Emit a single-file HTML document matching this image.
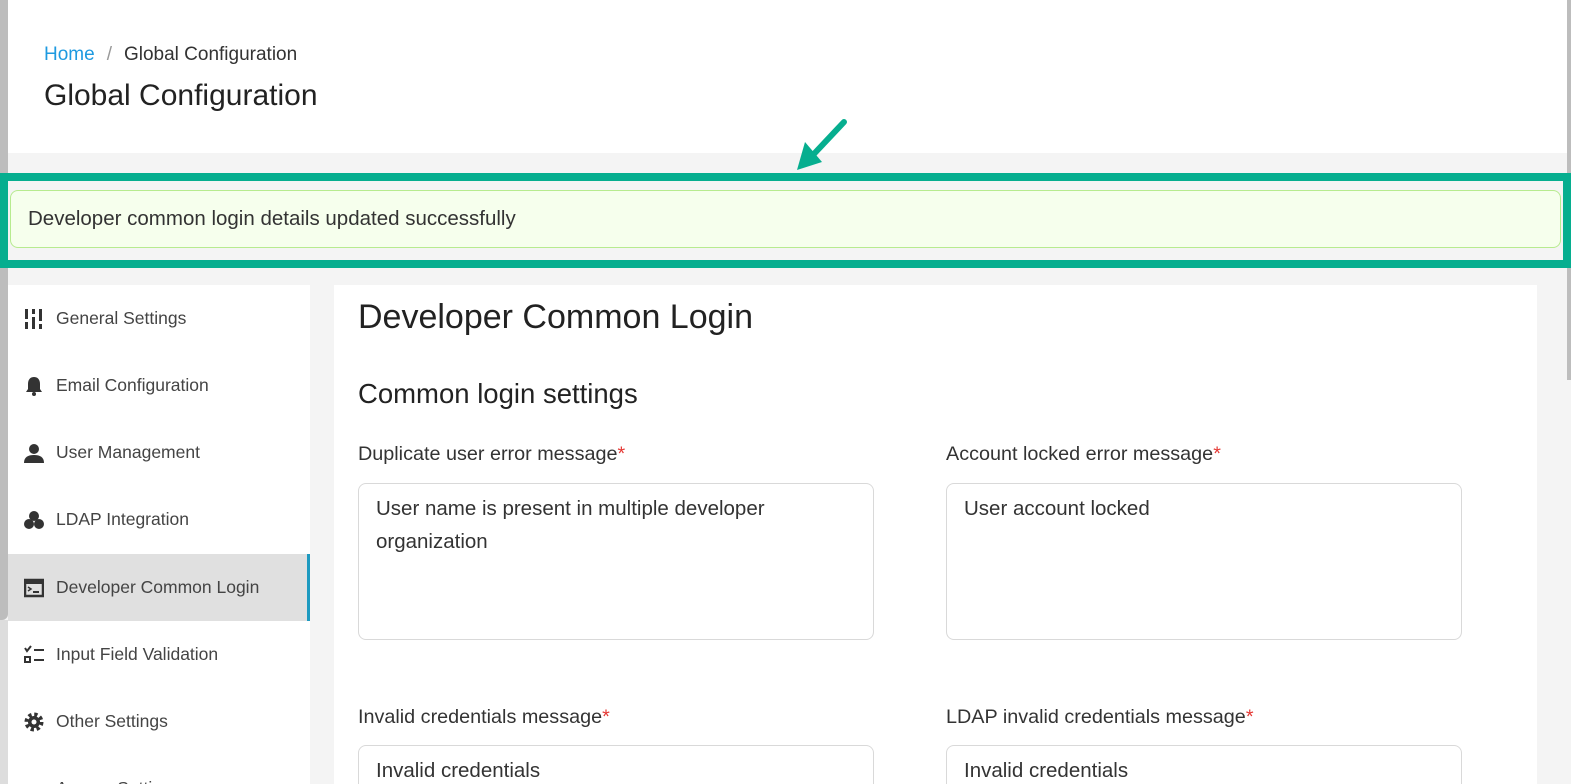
<!DOCTYPE html>
<html style="width:1571px;height:784px;overflow:hidden"><head><style>
*{box-sizing:border-box;margin:0;padding:0}
html,body{width:1571px;height:784px;overflow:hidden}
body{background:#f4f4f4;font-family:"Liberation Sans",sans-serif;color:#333}
#wrap{position:relative;width:1571px;height:784px;overflow:hidden}
.abs{position:absolute}
.hdr{left:0;top:0;width:1567px;height:153px;background:#fff}
.side{left:8px;top:285px;width:302px;height:499px;background:#fff;overflow:hidden}
.item{position:absolute;left:0;width:302px;height:67px;font-size:17.5px;color:#444;display:flex;align-items:center;padding-left:48px}
.item svg{position:absolute;left:16px;top:24px}
.main{left:334px;top:285px;width:1203px;height:499px;background:#fff}
.lbl{font-size:19.8px;color:#333;position:absolute}
.lbl b{color:#e53935;font-weight:normal}
.ta{position:absolute;border:1px solid #d9d9d9;border-radius:8px;background:#fff;font-size:20.5px;line-height:33px;padding:8px 17px;color:#333}
</style></head><body><div id="wrap">
<div class="abs hdr"></div>
<div class="abs" style="left:44px;top:44px;font-size:19px;color:#333"><span style="color:#1e9ae0">Home</span><span style="color:#999;margin:0 12px">/</span>Global Configuration</div>
<div class="abs" style="left:44px;top:79px;font-size:30px;color:#222">Global Configuration</div>
<div class="abs" style="left:0;top:0;width:8px;height:620px;background:#bdbdbd;border-radius:0 0 6px 0"></div>
<div class="abs" style="left:0;top:620px;width:8px;height:164px;background:#ddd"></div>
<div class="abs" style="left:1567px;top:0;width:4px;height:380px;background:#bdbdbd"></div>
<svg class="abs" style="left:790px;top:112px" width="66" height="62"><line x1="54" y1="10" x2="22" y2="44" stroke="#06ae8f" stroke-width="6" stroke-linecap="round"/><polygon points="7,58 15,30 32,50" fill="#06ae8f"/></svg>
<div class="abs" style="left:10px;top:190px;width:1551px;height:58px;background:#f6ffed;border:1px solid #b7eb8f;border-radius:8px;font-size:20.5px;padding:16px 0 0 17px;color:#333">Developer common login details updated successfully</div>
<div class="abs" style="left:0;top:173px;width:1571px;height:95px;border:8px solid #06ae8f"></div>
<div class="abs side">
<div class="item" style="top:0"><svg width="20" height="20" viewBox="0 0 20 20" fill="#333"><rect x="1" y="0" width="3" height="20"/><rect x="8" y="0" width="3" height="20"/><rect x="15" y="0" width="3" height="20"/><rect x="0" y="10" width="5" height="3" fill="#fff"/><rect x="7" y="5" width="5" height="3" fill="#fff"/><rect x="14" y="12" width="5" height="3" fill="#fff"/></svg>General Settings</div>
<div class="item" style="top:67px"><svg width="20" height="20" viewBox="0 0 20 20" fill="#333"><path d="M10 1c-4 0-6 3-6 7v5l-2 3h16l-2-3V8c0-4-2-7-6-7z"/><circle cx="10" cy="18" r="2"/></svg>Email Configuration</div>
<div class="item" style="top:134px"><svg width="20" height="20" viewBox="0 0 20 20" fill="#333"><circle cx="10" cy="6" r="5"/><path d="M0 20c0-6 4-8 10-8s10 2 10 8z"/></svg>User Management</div>
<div class="item" style="top:201px"><svg width="20" height="20" viewBox="0 0 20 20" fill="#333"><circle cx="10" cy="6" r="5"/><circle cx="5" cy="14" r="5"/><circle cx="15" cy="14" r="5"/></svg>LDAP Integration</div>
<div class="item" style="top:269px;background:#e0e0e0;border-right:3px solid #1e9ac0"><svg width="20" height="20" viewBox="0 0 20 20"><rect x="1" y="2" width="18" height="16" fill="none" stroke="#333" stroke-width="2.5"/><rect x="1" y="2" width="18" height="4" fill="#333"/><path d="M4 9l3 2-3 2" stroke="#333" stroke-width="1.5" fill="none"/><rect x="9" y="13" width="6" height="2" fill="#333"/></svg>Developer Common Login</div>
<div class="item" style="top:336px"><svg width="20" height="20" viewBox="0 0 20 20" fill="none" stroke="#333" stroke-width="2"><path d="M1 3l2 3 4-5"/><rect x="1" y="12" width="5" height="5"/><line x1="10" y1="5" x2="20" y2="5"/><line x1="10" y1="15" x2="20" y2="15"/></svg>Input Field Validation</div>
<div class="item" style="top:403px"><svg width="20" height="20" viewBox="0 0 20 20"><circle cx="10" cy="10" r="7" fill="none" stroke="#333" stroke-width="5" stroke-dasharray="3 2.5"/><circle cx="10" cy="10" r="6" fill="#333"/><circle cx="10" cy="10" r="2.5" fill="#fff"/></svg>Other Settings</div>
<div class="item" style="top:470px">Access Settings</div>
</div>
<div class="abs main"></div>
<div class="abs" style="left:358px;top:298px;font-size:34px;color:#222">Developer Common Login</div>
<div class="abs" style="left:358px;top:378px;font-size:27.5px;color:#222">Common login settings</div>
<div class="lbl" style="left:358px;top:443px">Duplicate user error message<b>*</b></div>
<div class="lbl" style="left:946px;top:443px">Account locked error message<b>*</b></div>
<div class="ta" style="left:358px;top:483px;width:516px;height:157px">User name is present in multiple developer organization</div>
<div class="ta" style="left:946px;top:483px;width:516px;height:157px">User account locked</div>
<div class="lbl" style="left:358px;top:706px">Invalid credentials message<b>*</b></div>
<div class="lbl" style="left:946px;top:706px">LDAP invalid credentials message<b>*</b></div>
<div class="ta" style="left:358px;top:745px;width:516px;height:60px">Invalid credentials</div>
<div class="ta" style="left:946px;top:745px;width:516px;height:60px">Invalid credentials</div>
</div></body></html>
